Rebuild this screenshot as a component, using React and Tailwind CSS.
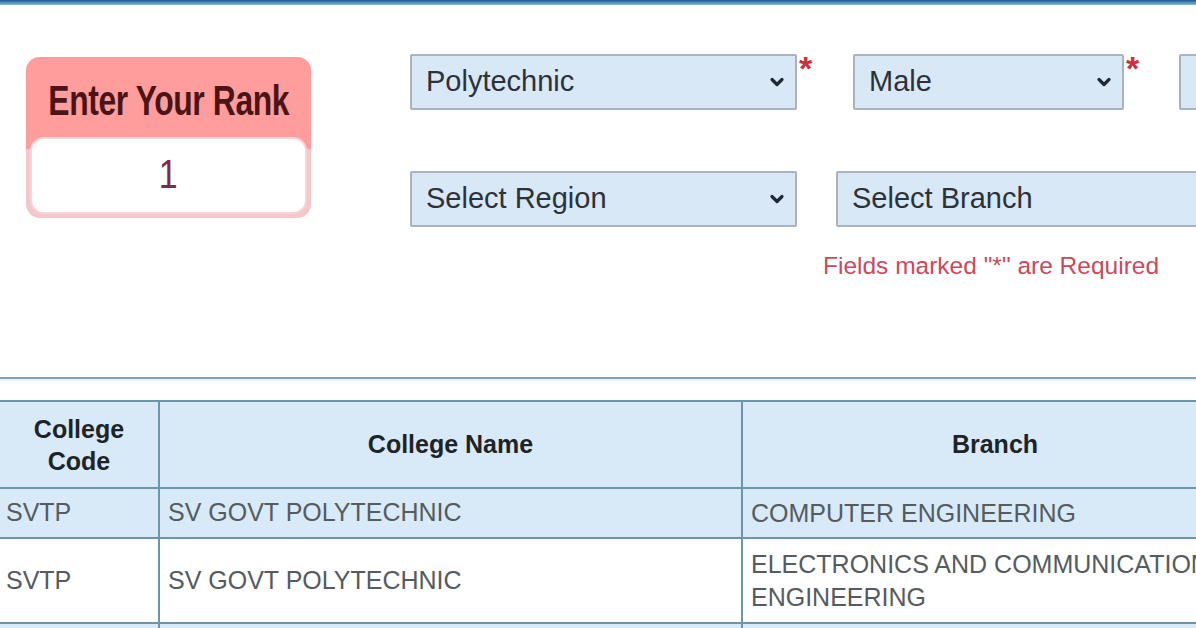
import React from 'react';

const Chevron = () => (
  <svg width="16" height="10" viewBox="0 0 16 10" className="shrink-0">
    <path d="M3 2.5l5 5 5-5" fill="none" stroke="#1f2933" strokeWidth="3.2" strokeLinecap="round" strokeLinejoin="round" />
  </svg>
);

const SelectBox = ({ label, className = '', chevron = true }) => (
  <div
    className={`h-[56px] flex items-center justify-between pl-[14px] pr-[10px] bg-[#d9e8f7] border-2 border-[#a9b3bd] rounded-[2px] text-[29px] text-[#2d3238] shrink-0 ${className}`}
  >
    <span>{label}</span>
    {chevron && <Chevron />}
  </div>
);

const Star = () => (
  <span className="self-start -mt-[1px] w-[15px] ml-[2px] text-[34px] leading-[30px] font-bold text-[#c9303a] shrink-0">*</span>
);

const rows = [
  { code: 'SVTP', name: 'SV GOVT POLYTECHNIC', branch: 'COMPUTER ENGINEERING', shade: true, h: 'h-[50px]' },
  { code: 'SVTP', name: 'SV GOVT POLYTECHNIC', branch: 'ELECTRONICS AND COMMUNICATION ENGINEERING', shade: false, h: 'h-[85px]' },
  { code: '', name: '', branch: '', shade: true, h: 'h-[50px]' },
];

export default function App() {
  return (
    <div
      className="w-[1196px] h-[628px] overflow-hidden bg-white"
      style={{ fontFamily: '"Liberation Sans", Arial, sans-serif' }}
    >
      {/* top bar */}
      <div className="h-[5px] bg-gradient-to-b from-[#1b5797] to-[#86bde0]" />

      {/* form */}
      <div className="flex items-start h-[372px]">
        {/* rank box */}
        <div className="ml-[26px] mt-[52px] w-[285px] h-[161px] rounded-[14px] bg-[#f5c7ca] overflow-hidden flex flex-col shrink-0">
          <div className="h-[92px] bg-[#ff9d9d] flex justify-center pt-[22px]">
            <span className="inline-block text-[43px] leading-[43px] font-bold text-[#4a1418] tracking-[-0.5px] scale-x-[0.74] whitespace-nowrap">
              Enter Your Rank
            </span>
          </div>
          <div className="-mt-[12px] mx-[4px] mb-[4px] flex-1 rounded-[14px] bg-white border-2 border-[#f7d4d7] flex justify-center items-start pt-[15px]">
            <span className="inline-block text-[40px] leading-[40px] text-[#7e2a4c] scale-x-[0.85]">1</span>
          </div>
        </div>

        {/* selects */}
        <div className="ml-[99px] mt-[49px] flex flex-col shrink-0">
          <div className="flex items-center">
            <SelectBox label="Polytechnic" className="w-[387px]" />
            <Star />
            <SelectBox label="Male" className="ml-[39px] w-[271px]" />
            <Star />
            <SelectBox label="" className="ml-[38px] w-[200px]" chevron={false} />
          </div>
          <div className="flex items-center mt-[61px]">
            <SelectBox label="Select Region" className="w-[387px]" />
            <SelectBox label="Select Branch" className="ml-[39px] w-[420px]" chevron={false} />
          </div>
          <div className="ml-[413px] mt-[24px] text-[24.5px] leading-[30px] text-[#c94a5a] whitespace-nowrap">
            Fields marked "*" are Required
          </div>
        </div>
      </div>

      {/* divider */}
      <div className="h-[4px] border-t-2 border-[#7ea3b3] bg-[#e9f3f7]" />
      <div className="h-[19px]" />

      {/* results table */}
      <table className="-ml-[2px] border-collapse table-fixed w-[1300px] text-[25px]">
        <colgroup>
          <col className="w-[160px]" />
          <col className="w-[583px]" />
          <col className="w-[506px]" />
          <col className="w-[51px]" />
        </colgroup>
        <thead>
          <tr className="h-[87px] bg-[#d8eaf8]">
            <th className="border-2 border-[#6b96a8] font-bold text-[#1e2328] leading-[32px]">College<br />Code</th>
            <th className="border-2 border-[#6b96a8] font-bold text-[#1e2328]">College Name</th>
            <th className="border-2 border-[#6b96a8] font-bold text-[#1e2328]">Branch</th>
            <th className="border-2 border-[#6b96a8]" />
          </tr>
        </thead>
        <tbody>
          {rows.map((r, i) => (
            <tr key={i} className={`${r.h} ${r.shade ? 'bg-[#d8eaf8]' : 'bg-white'}`}>
              <td className="border-2 border-[#6b96a8] pl-[6px] text-[#555b60]">{r.code}</td>
              <td className="border-2 border-[#6b96a8] pl-[8px] text-[#555b60]">{r.name}</td>
              <td className="border-2 border-[#6b96a8] pl-[8px] pr-[20px] text-[#555b60] leading-[33px]">{r.branch}</td>
              <td className="border-2 border-[#6b96a8]" />
            </tr>
          ))}
        </tbody>
      </table>
    </div>
  );
}
